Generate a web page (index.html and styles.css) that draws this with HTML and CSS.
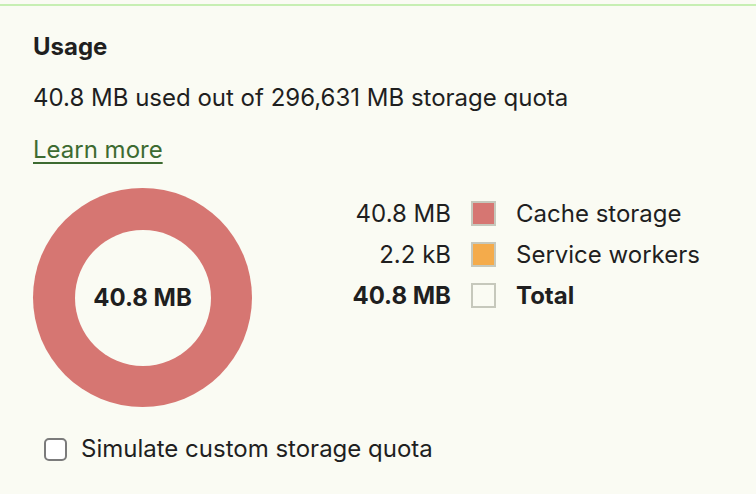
FILE: index.html
```
<!DOCTYPE html>
<html lang="en">
<head>
<meta charset="utf-8" />
<title>Storage usage</title>
<link rel="stylesheet" href="styles.css">
</head>
<body>
	<div class="top-rule"></div>
	<section class="usage">
		<h2 class="usage-title">Usage</h2>
		<p class="usage-quota">40.8 MB used out of 296,631 MB storage quota</p>
		<a class="learn-more" href="#">Learn more</a>

		<div class="usage-breakdown">
			<div class="pie">
				<div class="pie-hole">40.8 MB</div>
			</div>
			<div class="legend">
				<div class="legend-row">
					<span class="legend-value">40.8 MB</span>
					<span class="swatch swatch-cache"></span>
					<span class="legend-label">Cache storage</span>
				</div>
				<div class="legend-row">
					<span class="legend-value">2.2 kB</span>
					<span class="swatch swatch-workers"></span>
					<span class="legend-label">Service workers</span>
				</div>
				<div class="legend-row legend-total">
					<span class="legend-value">40.8 MB</span>
					<span class="swatch"></span>
					<span class="legend-label">Total</span>
				</div>
			</div>
		</div>

		<label class="quota-toggle">
			<span class="checkbox"></span>
			Simulate custom storage quota
		</label>
	</section>
</body>
</html>
```
FILE: styles.css
```
html, body { height: 100%; }

body {
	background: #fafbf3;
	color: #1f1f1f;
	font-family: Inter, "Noto Sans", sans-serif;
	font-size: 24px;
	margin: 0px;
	padding: 0px;
	overflow: hidden;
}

.top-rule {
	height: 2px;
	margin-top: 4px;
	background: #c7efb3;
}

.usage {
	padding: 0 0 0 33px;
}

.usage-title {
	font-size: 24px;
	font-weight: bold;
	margin: 27px 0 0 0;
	line-height: 28px;
}

.usage-quota {
	margin: 23px 0 0 0;
	line-height: 28px;
}

.learn-more {
	display: inline-block;
	margin-top: 24px;
	line-height: 28px;
	color: #3d6b31;
	text-decoration: underline;
	text-underline-offset: 4px;
	text-decoration-thickness: 1.5px;
}

.usage-breakdown {
	display: flex;
	align-items: flex-start;
	margin-top: 24px;
}

.pie {
	width: 219px;
	height: 219px;
	border-radius: 50%;
	background: #d67672;
	display: flex;
	align-items: center;
	justify-content: center;
	flex: none;
}

.pie-hole {
	width: 136px;
	height: 136px;
	border-radius: 50%;
	background: #fafbf3;
	display: flex;
	align-items: center;
	justify-content: center;
	font-weight: bold;
}

.legend {
	display: grid;
	row-gap: 16px;
	margin-top: 13px;
}

.legend-row {
	display: grid;
	grid-template-columns: 199px 25px auto;
	column-gap: 20px;
	align-items: center;
	line-height: 25px;
}

.legend-value {
	text-align: right;
}

.legend-total {
	font-weight: bold;
}

.swatch {
	box-sizing: border-box;
	width: 25px;
	height: 25px;
	border: 2px solid #c6c8bc;
}

.swatch-cache { background: #d67672; }
.swatch-workers { background: #f4ab4b; }

.quota-toggle {
	display: flex;
	align-items: center;
	gap: 14px;
	margin: 28px 0 0 11px;
	line-height: 28px;
}

.checkbox {
	box-sizing: border-box;
	width: 23px;
	height: 23px;
	border: 2px solid #7b7b7b;
	border-radius: 5px;
	background: #fff;
}
```
